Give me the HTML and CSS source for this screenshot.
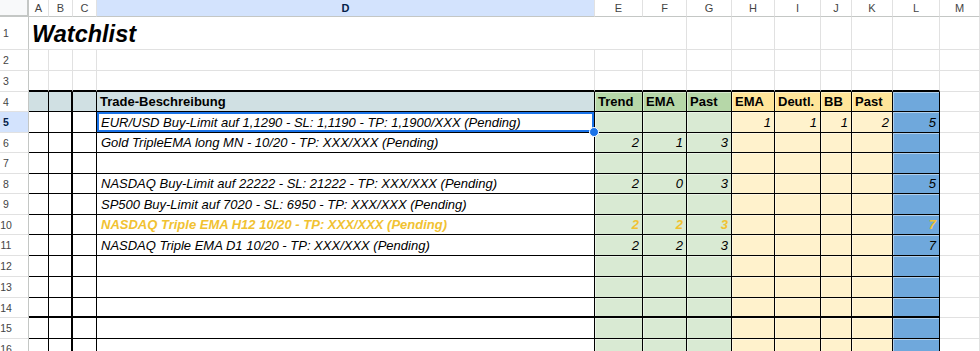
FILE: index.html
```html
<!DOCTYPE html>
<html lang="de">
<head>
  <meta charset="UTF-8" />
  <title>Watchlist</title>
  <link rel="stylesheet" href="styles.css">
</head>
<body>

<div class="sheet" id="sheet"></div>

<script>
  // columns of the visible sheet
  const cols = ['A','B','C','D','E','F','G','H','I','J','K','L','M'];

  // header row of the table (row 4)
  const head = {
    D: 'Trade-Beschreibung',
    E: 'Trend', F: 'EMA', G: 'Past',
    H: 'EMA', I: 'Deutl.', J: 'BB', K: 'Past'
  };

  // data rows
  const data = {
    5:  { D: 'EUR/USD Buy-Limit auf 1,1290 - SL: 1,1190 - TP: 1,1900/XXX (Pending)', H: 1, I: 1, J: 1, K: 2, L: 5 },
    6:  { D: 'Gold TripleEMA long MN - 10/20 - TP: XXX/XXX (Pending)', E: 2, F: 1, G: 3 },
    8:  { D: 'NASDAQ Buy-Limit auf 22222 - SL: 21222 - TP: XXX/XXX (Pending)', E: 2, F: 0, G: 3, L: 5 },
    9:  { D: 'SP500 Buy-Limit auf 7020 - SL: 6950 - TP: XXX/XXX (Pending)' },
    10: { D: 'NASDAQ Triple EMA H12 10/20 - TP: XXX/XXX (Pending)', E: 2, F: 2, G: 3, L: 7, hot: true },
    11: { D: 'NASDAQ Triple EMA D1 10/20 - TP: XXX/XXX (Pending)', E: 2, F: 2, G: 3, L: 7 }
  };

  function zone(c) {
    if ('EFG'.includes(c)) return 'green';
    if ('HIJK'.includes(c)) return 'yellow';
    if (c === 'L') return 'blue';
    return 'plain';
  }

  const sheet = document.getElementById('sheet');
  let html = '<div class="corner"></div>';

  cols.forEach(c => {
    html += `<div class="colhead${c === 'D' ? ' active' : ''}">${c}</div>`;
  });

  for (let r = 1; r <= 16; r++) {
    html += `<div class="rowhead${r === 5 ? ' active' : ''}">${r}</div>`;

    if (r === 1) {
      html += '<div class="cell title">Watchlist</div>';
      cols.slice(6).forEach(() => { html += '<div class="cell"></div>'; });
      continue;
    }

    const row = data[r] || {};
    cols.forEach(c => {
      const cls = ['cell'];
      let text = '';
      if (r === 3 && c !== 'M') cls.push('edge');
      if (r >= 4 && c !== 'M') {
        cls.push('tbl', zone(c));
        if (c === 'B') cls.push('split');
        if (c !== 'D') cls.push('num');
        if (r === 14) cls.push('edge');
      }
      if (r === 4) {
        cls.push('hdr');
        text = head[c] || '';
      } else if (row[c] !== undefined) {
        text = row[c];
      }
      if (row.hot) cls.push('hot');
      if (r === 5 && c === 'D') cls.push('cur');
      html += `<div class="${cls.join(' ')}">${text}${r === 5 && c === 'D' ? '<span class="handle"></span>' : ''}</div>`;
    });
  }

  sheet.innerHTML = html;
</script>

</body>
</html>
```

FILE: styles.css
```css
body {
  margin: 0;
  background: #fff;
  font-family: 'Liberation Sans', Arial, sans-serif;
  color: #000;
  overflow: hidden;
}

.sheet {
  display: grid;
  grid-template-columns: 29px 20px 24px 24px 498px 48px 44px 45px 43px 46px 31px 41px 47px 40px;
  grid-template-rows: 17px 33px 21px 21px 20px 21px 20px 21px 20px 21px 20px 21px 21px 21px 20px 21px 21px;
}

/* headers */
.corner {
  background: #f8f9fa;
  border-right: 2px solid #c4c7c5;
  border-bottom: 2px solid #c4c7c5;
}

.colhead {
  display: flex;
  align-items: center;
  justify-content: center;
  font-size: 11px;
  color: #444;
  border-right: 1px solid #e1e1e1;
  border-bottom: 1px solid #c4c7c5;
}

.rowhead {
  display: flex;
  align-items: center;
  justify-content: center;
  padding-right: 16px;
  font-size: 10.5px;
  color: #444;
  border-right: 1px solid #c4c7c5;
  border-bottom: 1px solid #e1e1e1;
}

.colhead.active,
.rowhead.active {
  background: #d3e3fd;
  color: #041e49;
  font-weight: bold;
}

/* cells */
.cell {
  display: flex;
  align-items: flex-end;
  min-width: 0;
  padding: 0 3px 2px 4px;
  line-height: 15px;
  font-size: 13px;
  font-style: italic;
  white-space: nowrap;
  border-right: 1px solid #e1e1e1;
  border-bottom: 1px solid #e1e1e1;
}

.title {
  grid-column: span 6;
  padding-left: 3px;
  line-height: 26px;
  font-size: 23.5px;
  font-weight: bold;
}

.tbl {
  border-right-color: #000;
  border-bottom-color: #000;
}

.edge { border-bottom: 2px solid #000; }

.split { border-right-width: 2px; }

.num { justify-content: flex-end; }

.green  { background: #d9ead3; }
.yellow { background: #fff2cc; }
.blue   { background: #6fa8dc; }

.green, .yellow, .blue {
  box-shadow: inset 1px 1px 0 rgba(255, 255, 255, 0.45);
}

.hdr {
  justify-content: flex-start;
  padding-left: 3px;
  font-style: normal;
  font-weight: bold;
}

.hdr.plain  { background: #d0e0e3; }
.hdr.green  { background: #b6d7a8; }
.hdr.yellow { background: #ffe599; }

.hot {
  color: #f1c232;
  font-weight: bold;
}

/* selected cell */
.cur { position: relative; }

.cur::before {
  content: '';
  position: absolute;
  inset: 0;
  border: 2px solid #1a73e8;
}

.handle {
  position: absolute;
  right: -5px;
  bottom: -5px;
  z-index: 2;
  width: 8px;
  height: 8px;
  border: 1px solid #fff;
  border-radius: 50%;
  background: #1a73e8;
}
```
